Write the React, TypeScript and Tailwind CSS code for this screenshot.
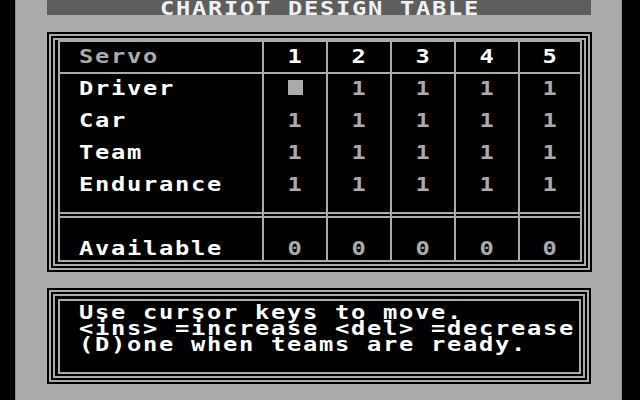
import type { ReactNode } from "react";

// 8x8 bitmap look: DejaVu Sans Mono bold, widened so every glyph sits in a 16px cell
const FONT = "font-['DejaVu_Sans_Mono',monospace] font-bold text-[19px] leading-[16px]";

const ROWS = ["Driver", "Car", "Team", "Endurance"];
const SERVOS = [1, 2, 3, 4, 5];

function Txt({ children }: { children: ReactNode }) {
  return (
    <span className="inline-block origin-left scale-x-125 whitespace-pre tracking-[1.36px]">
      {children}
    </span>
  );
}

function Digit({ children }: { children: ReactNode }) {
  return (
    <span className="inline-block origin-center scale-x-125 whitespace-pre">{children}</span>
  );
}

// black panel with a double rule, the inner content gets its own single rule
function Frame({ children, className }: { children: ReactNode; className: string }) {
  return (
    <div className={`bg-black p-[2px] ${className}`}>
      <div className="h-full border-2 border-[#aaa] p-[2px]">{children}</div>
    </div>
  );
}

export default function App() {
  return (
    <div className={`h-[400px] w-[640px] bg-black ${FONT}`}>
      <div className="ml-[15px] flex h-full w-[607px] flex-col border-x border-[#8c8c8c] bg-[#aaa] pl-[31px]">
        <div className="h-[15px] w-[544px] overflow-hidden bg-[#5e5e5e] pl-[113px] text-[#f0f0f0]">
          <Txt>CHARIOT DESIGN TABLE</Txt>
        </div>

        <Frame className="mt-[17px] h-[240px] w-[545px]">
          <div className="h-full border-2 border-[#aaa] pb-[2px] pl-[3px] pr-[2px]">
            <div className="grid grid-cols-[202px_62px_62px_62px_62px_60px] grid-rows-[30px_138px_2px_42px] gap-[2px] bg-[#aaa] p-[2px]">
              <div className="bg-black pl-[19px] pt-[6px] text-[#aaa]">
                <Txt>Servo</Txt>
              </div>
              {SERVOS.map((s) => (
                <div key={s} className="flex justify-center bg-black pt-[6px] text-white">
                  <Digit>{s}</Digit>
                </div>
              ))}

              <div className="flex flex-col gap-[16px] bg-black pl-[19px] pt-[6px] text-white">
                {ROWS.map((r) => (
                  <div key={r} className="h-[16px]">
                    <Txt>{r}</Txt>
                  </div>
                ))}
              </div>
              {SERVOS.map((s) => (
                <div key={s} className="flex flex-col items-center gap-[16px] bg-black pt-[6px] text-[#aaa]">
                  {ROWS.map((r, i) =>
                    s === 1 && i === 0 ? (
                      <div key={r} className="flex h-[16px] w-[16px] justify-center">
                        <div className="h-[15px] w-[15px] bg-[#aaa]" />
                      </div>
                    ) : (
                      <div key={r} className="h-[16px]">
                        <Digit>1</Digit>
                      </div>
                    ),
                  )}
                </div>
              ))}

              {[0, 1, 2, 3, 4, 5].map((k) => (
                <div key={k} className="bg-black" />
              ))}

              <div className="bg-black pl-[19px] pt-[22px] text-white">
                <Txt>Available</Txt>
              </div>
              {SERVOS.map((s) => (
                <div key={s} className="flex justify-center bg-black pt-[22px] text-[#aaa]">
                  <Digit>0</Digit>
                </div>
              ))}
            </div>
          </div>
        </Frame>

        <Frame className="mt-[16px] h-[96px] w-[544px]">
          <div className="h-full border-2 border-[#aaa] pb-[2px] pl-[3px] pr-[2px] pt-[3px]">
            <div className="h-full border-2 border-[#aaa] pl-[19px] pt-[3px] text-white">
              <div>
                <Txt>Use cursor keys to move.</Txt>
              </div>
              <div>
                <Txt>{"<ins> =increase <del> =decrease"}</Txt>
              </div>
              <div>
                <Txt>(D)one when teams are ready.</Txt>
              </div>
            </div>
          </div>
        </Frame>
      </div>
    </div>
  );
}
